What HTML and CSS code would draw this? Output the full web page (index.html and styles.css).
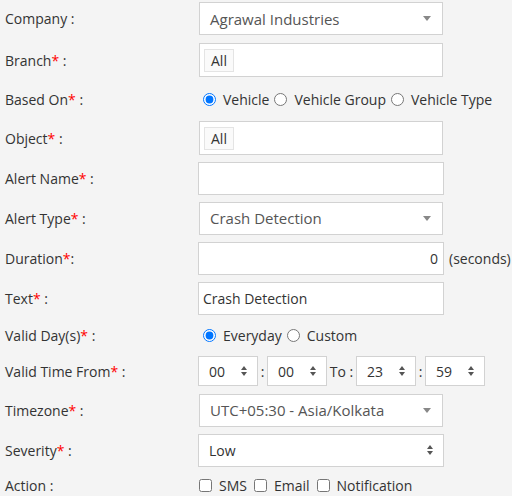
FILE: index.html
```html
<!DOCTYPE html>
<html lang="en">
<head>
<meta charset="UTF-8">
<link rel="stylesheet" href="styles.css">
</head>
<body>
    <div class="alert-form">
        <div class="row first">
            <label class="label">Company :</label>
            <div class="select2">
                <span>Agrawal Industries</span>
                <span class="caret"></span>
            </div>
        </div>
        <div class="row">
            <label class="label">Branch<span class="req">*</span> :</label>
            <div class="multi"><span class="tag">All</span></div>
        </div>
        <div class="row radio-row">
            <label class="label">Based On<span class="req">*</span> :</label>
            <div class="options">
                <label class="opt"><input type="radio" name="based" checked>Vehicle</label>
                <label class="opt"><input type="radio" name="based">Vehicle Group</label>
                <label class="opt"><input type="radio" name="based">Vehicle Type</label>
            </div>
        </div>
        <div class="row">
            <label class="label">Object<span class="req">*</span> :</label>
            <div class="multi"><span class="tag">All</span></div>
        </div>
        <div class="row">
            <label class="label">Alert Name<span class="req">*</span> :</label>
            <div class="text-input"></div>
        </div>
        <div class="row">
            <label class="label">Alert Type<span class="req">*</span> :</label>
            <div class="select2">
                <span>Crash Detection</span>
                <span class="caret"></span>
            </div>
        </div>
        <div class="row">
            <label class="label">Duration<span class="req">*</span>:</label>
            <div class="text-input number">0</div>
            <span class="unit">(seconds)</span>
        </div>
        <div class="row">
            <label class="label">Text<span class="req">*</span> :</label>
            <div class="text-input">Crash Detection</div>
        </div>
        <div class="row days-row">
            <label class="label">Valid Day(s)<span class="req">*</span> :</label>
            <div class="options">
                <label class="opt"><input type="radio" name="days" checked>Everyday</label>
                <label class="opt"><input type="radio" name="days">Custom</label>
            </div>
        </div>
        <div class="row time-row">
            <label class="label">Valid Time From<span class="req">*</span> :</label>
            <div class="time-fields">
                <div class="time-box"><span>00</span><span class="updown"></span></div>
                <span class="sep">:</span>
                <div class="time-box"><span>00</span><span class="updown"></span></div>
                <span class="sep to">To :</span>
                <div class="time-box"><span>23</span><span class="updown"></span></div>
                <span class="sep">:</span>
                <div class="time-box"><span>59</span><span class="updown"></span></div>
            </div>
        </div>
        <div class="row">
            <label class="label">Timezone<span class="req">*</span> :</label>
            <div class="select2">
                <span>UTC+05:30 - Asia/Kolkata</span>
                <span class="caret"></span>
            </div>
        </div>
        <div class="row">
            <label class="label">Severity<span class="req">*</span> :</label>
            <div class="native-select">
                <span>Low</span>
                <span class="updown"></span>
            </div>
        </div>
        <div class="row action-row">
            <label class="label">Action :</label>
            <div class="options checks">
                <label class="opt"><input type="checkbox">SMS</label>
                <label class="opt"><input type="checkbox">Email</label>
                <label class="opt"><input type="checkbox">Notification</label>
            </div>
        </div>
    </div>
</body>
</html>
```

FILE: styles.css
```css
body, html {
    margin: 0;
    padding: 0;
    background-color: #f4f4f4;
    font-family: "Open Sans", Arial, sans-serif;
    color: #333;
}

.alert-form {
    padding-left: 5px;
}

/* Rows */
.row {
    display: flex;
    align-items: center;
    height: 40px;
    font-size: 14px;
}

.row.first {
    height: 37px;
    margin-bottom: 3px;
}

.radio-row {
    height: 38px;
}

.days-row {
    height: 34px;
}

.time-row {
    height: 38px;
}

.action-row {
    height: 30px;
}

.label {
    width: 193px;
    flex-shrink: 0;
}

.req {
    color: #ff0000;
}

/* Select2 style dropdown */
.select2 {
    box-sizing: border-box;
    width: 244px;
    height: 33px;
    margin-left: 1px;
    padding: 0 11px 0 10px;
    display: flex;
    align-items: center;
    justify-content: space-between;
    background-color: #fff;
    border: 1px solid #d2d2d2;
    font-size: 15px;
    color: #555;
}

.caret {
    width: 0;
    height: 0;
    border-left: 4px solid transparent;
    border-right: 4px solid transparent;
    border-top: 5px solid #888;
}

/* Multi select with tags */
.multi {
    box-sizing: border-box;
    width: 244px;
    height: 34px;
    margin-left: 1px;
    padding: 0 4px;
    display: flex;
    align-items: center;
    background-color: #fff;
    border: 1px solid #d2d2d2;
}

.tag {
    box-sizing: border-box;
    height: 23px;
    padding: 0 6px;
    display: flex;
    align-items: center;
    border: 1px solid #e4e4e4;
    background-color: #fafafa;
    font-size: 14px;
}

/* Text inputs */
.text-input {
    box-sizing: border-box;
    width: 246px;
    height: 33px;
    padding: 0 5px 0 4px;
    display: flex;
    align-items: center;
    background-color: #fff;
    border: 1px solid #d2d2d2;
}

.text-input.number {
    justify-content: flex-end;
}

.unit {
    margin-left: 5px;
}

/* Radios and checkboxes */
.options {
    display: flex;
    align-items: center;
}

.opt {
    display: flex;
    align-items: center;
}

.opt input {
    width: 13px;
    height: 13px;
    margin: 0 7px 0 5px;
    accent-color: #0075ff;
}

.checks .opt input {
    margin: 0 7px 0 1px;
}

.checks .opt + .opt input {
    margin-left: 7px;
}

/* Time pickers */
.time-fields {
    display: flex;
    align-items: center;
}

.time-box {
    box-sizing: border-box;
    width: 60px;
    height: 30px;
    padding: 0 9px 0 10px;
    display: flex;
    align-items: center;
    justify-content: space-between;
    background-color: #fff;
    border: 1px solid #d2d2d2;
}

.sep {
    width: 9px;
    text-align: center;
}

.sep.to {
    width: 29px;
}

.native-select {
    box-sizing: border-box;
    width: 246px;
    height: 33px;
    padding: 0 9px 0 10px;
    display: flex;
    align-items: center;
    justify-content: space-between;
    background-color: #fff;
    border: 1px solid #d2d2d2;
}

.updown {
    position: relative;
    width: 7px;
    height: 10px;
}

.updown::before,
.updown::after {
    content: "";
    position: absolute;
    left: 0;
    border-left: 3.5px solid transparent;
    border-right: 3.5px solid transparent;
}

.updown::before {
    top: 0;
    border-bottom: 4px solid #555;
}

.updown::after {
    bottom: 0;
    border-top: 4px solid #555;
}
```
